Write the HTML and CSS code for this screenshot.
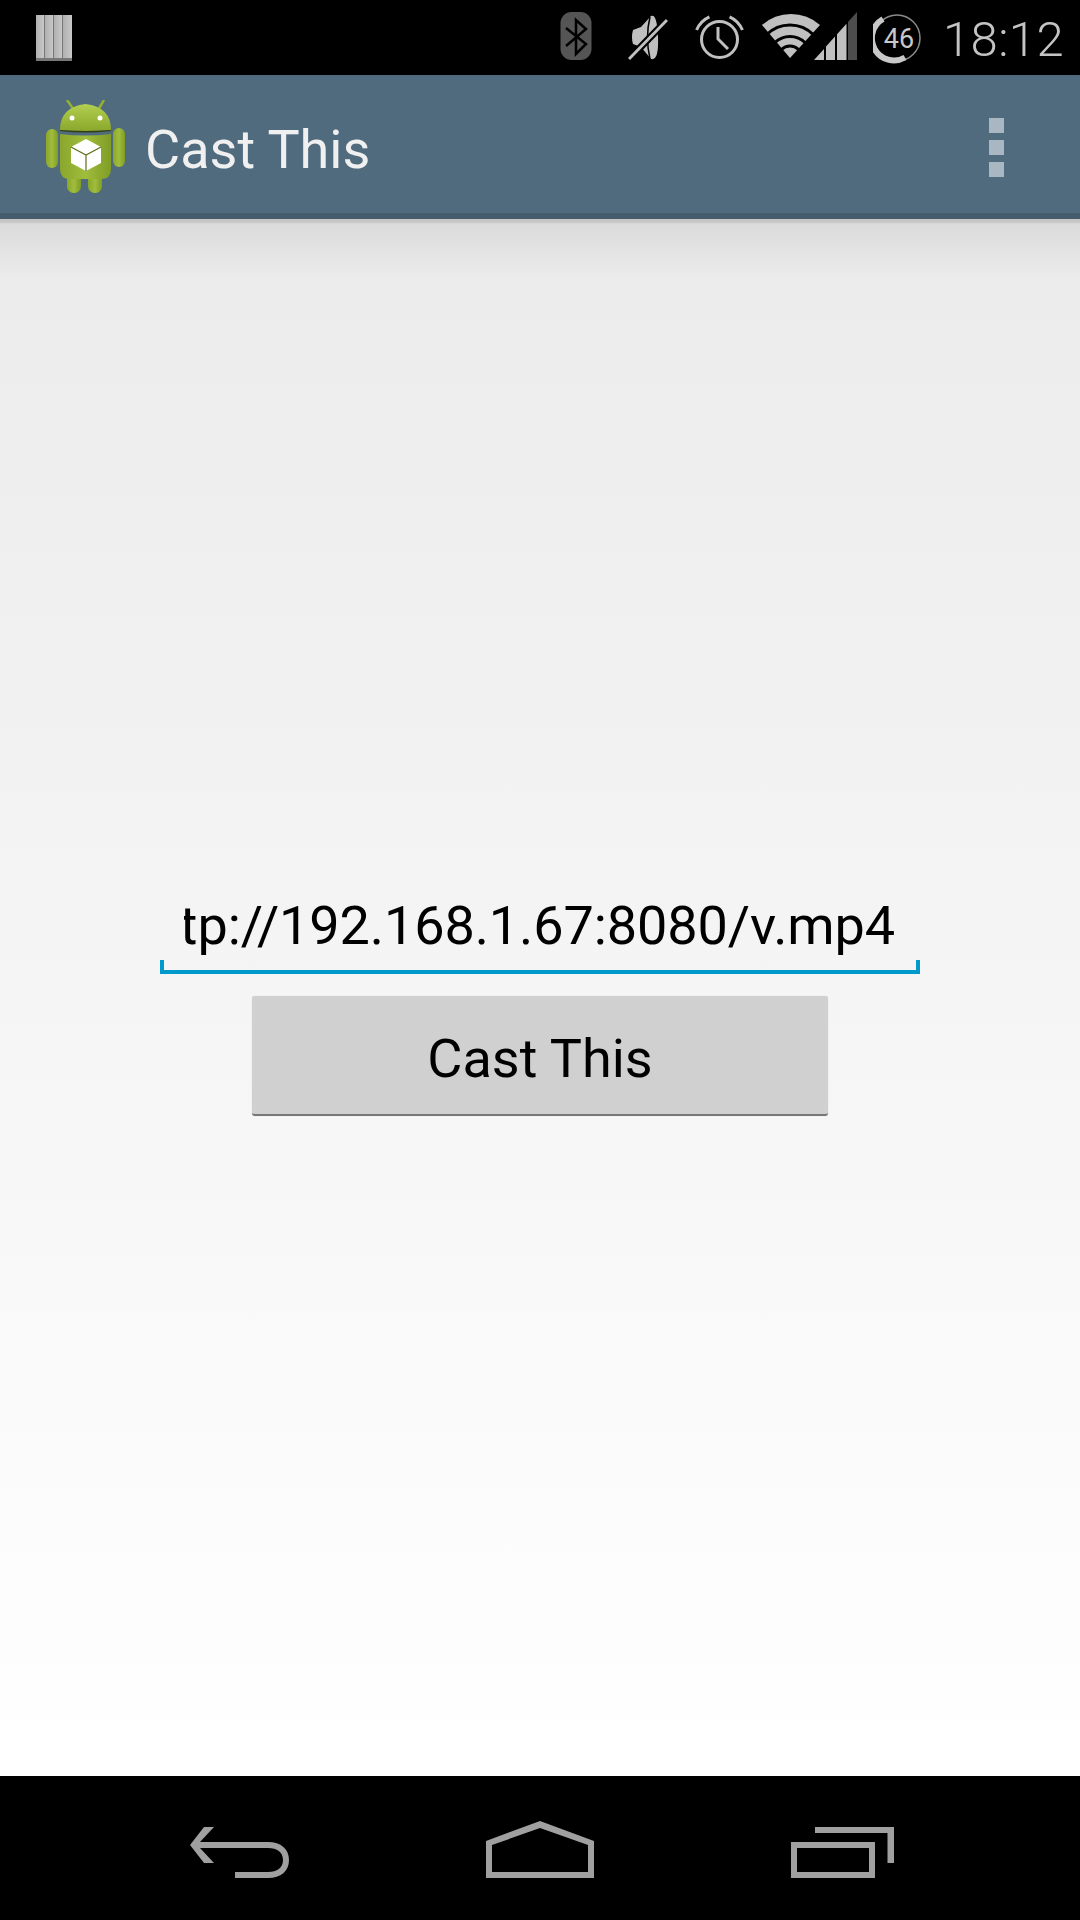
FILE: index.html
```html
<!DOCTYPE html>
<html lang="en">
<head>
<meta charset="utf-8">
<title>Cast This</title>
<link rel="stylesheet" href="styles.css">
</head>
<body>
<div class="screen">
  <header class="status">
    <svg class="sb-notif" width="36" height="75" viewBox="36 0 36 75">
      <defs>
        <linearGradient id="bar" x1="0" x2="1" y1="0" y2="0"><stop offset="0" stop-color="#b0b0b0"/><stop offset="1" stop-color="#c8c8c8"/></linearGradient>
      </defs>
      <path class="f-bevel" d="M36 17q0-2 2-2h32q2 0 2 2v44H36z"/>
      <rect x="36" y="15" width="8" height="43" fill="url(#bar)"/>
      <rect x="45" y="15" width="8" height="43" fill="url(#bar)"/>
      <rect x="54" y="15" width="8" height="43" fill="url(#bar)"/>
      <rect x="63" y="15" width="9" height="43" fill="url(#bar)"/>
    </svg>
    <svg class="sb-bt" width="32" height="75" viewBox="560 0 32 75">
      <rect x="560.500" y="12" width="31" height="48" rx="11" fill="#555"/>
      <path d="M566 28l20 16-10 10V20l10 9-20 17" fill="none" stroke="#000" stroke-width="2.500"/>
    </svg>
    <svg class="sb-mute" width="40" height="75" viewBox="628 0 40 75">
      <path class="f-ic" d="M633 30l8-3 10-11q6-3 7 21t-7 22L641 47l-8-3q-2-7 0-14z"/>
      <path d="M650 17q-5 20 0 42" fill="none" stroke="#000" stroke-width="1.500"/>
      <path d="M630 58l36-37" stroke="#000" stroke-width="7"/>
      <path d="M629 59l38-39" stroke="#c0c0c0" stroke-width="3"/>
    </svg>
    <svg class="sb-alarm" width="50" height="75" viewBox="695 0 50 75">
      <circle cx="719.500" cy="39.500" r="18" class="s-ic"/>
      <path class="s-ic" d="M718 27v12l10 10"/>
      <path class="s-ic" d="M696.600 30a24.800 24.800 0 0 1 12.800-13.200M729.600 16.800a24.800 24.800 0 0 1 12.800 13.200"/>
    </svg>
    <svg class="sb-net" width="97" height="75" viewBox="761 0 97 75">
      <path class="f-ic" d="M790 58L762 25A43.500 43.500 0 0 1 820 25Z"/>
      <g fill="none" stroke="#000" stroke-width="3">
        <circle cx="790" cy="58" r="33"/>
        <circle cx="790" cy="58" r="21.500"/>
        <circle cx="790" cy="58" r="12"/>
      </g>
      <path d="M812 60L826 44V60H812Z" fill="#000"/>
      <path class="f-ic" d="M814 60l10-11v11zM826 46.600l9-10V60h-9zM837 34.300l9.500-10.600V60H837z"/>
      <path d="M848 22l9-10v48h-9z" fill="#4d4d4d"/>
    </svg>
    <svg class="sb-batt" width="50" height="75" viewBox="873 0 50 75">
      <circle cx="897" cy="38" r="23" fill="none" stroke="#8a8a8a" stroke-width="1.500"/>
      <path d="M883 19A21 21 0 0 0 905 57.500" fill="none" stroke="#c8c8c8" stroke-width="6"/>
      <text class="batt-text" x="899" y="47.500" text-anchor="middle">46</text>
    </svg>
    <span class="time">18:12</span>
  </header>

  <div class="actionbar">
    <svg class="logo" width="80" height="94" viewBox="45 100 80 94">
      <defs>
        <linearGradient id="g-head" x1="0" x2="0" y1="0" y2="1"><stop offset="0" stop-color="#b3cf50"/><stop offset="1" stop-color="#8aa82c"/></linearGradient>
        <linearGradient id="g-body" x1="0" x2="1" y1="0" y2="0"><stop offset="0" stop-color="#8aa62d"/><stop offset=".5" stop-color="#a0bd3c"/><stop offset="1" stop-color="#7f9c26"/></linearGradient>
      </defs>
      <path d="M67 100l7 10M104 100l-6 10" stroke="#93b034" stroke-width="2.500"/>
      <rect x="46" y="129" width="12" height="39" rx="6" fill="url(#g-body)"/>
      <rect x="113" y="128" width="12" height="39" rx="6" fill="url(#g-body)"/>
      <rect x="67" y="170" width="14" height="23" rx="6.500" fill="url(#g-body)"/>
      <rect x="88" y="170" width="14" height="23" rx="6.500" fill="url(#g-body)"/>
      <path d="M60 130q0-23 25.500-26Q111 107 111 130q-25 2-51 0z" fill="url(#g-head)"/>
      <path d="M60 131q25 3 51 0v-1q-26 2-51 0z" fill="#33400f"/>
      <path d="M60 134q25 3 51 0v35q0 10-10 10H70q-10 0-10-10z" fill="url(#g-body)"/>
      <circle cx="72" cy="118" r="2.500" fill="#fff"/>
      <circle cx="100" cy="118" r="2.500" fill="#fff"/>
      <path d="M71 147l15-8 15 8v16l-15 8-15-8z" fill="#fff"/>
      <path d="M71 147l15 8 15-8M86 155v16" fill="none" stroke="#5d6f1c" stroke-width="1.200"/>
    </svg>
    <span class="title">Cast This</span>
    <div class="overflow"><span></span><span></span><span></span></div>
  </div>

  <main class="content">
    <div class="field">
      <div class="field-clip"><span class="field-text">http://192.168.1.67:8080/v.mp4</span></div>
    </div>
    <button class="cast" type="button">Cast This</button>
  </main>

  <nav class="navbar">
    <svg width="99" height="144" viewBox="190 1776 99 144">
      <path class="f-nav" d="M204 1827h10l-14 15h68c13 0 21 7 21 18s-8 18-21 18h-33v-6h33c9 0 15-4 15-12s-6-12-15-12h-68l14 15h-10l-14-18z"/>
    </svg>
    <svg width="108" height="144" viewBox="486 1776 108 144">
      <path class="f-nav" fill-rule="evenodd" d="M486 1841l54-20 54 20v37H486zM492 1845v27h96v-27l-48-17z"/>
    </svg>
    <svg width="103" height="144" viewBox="792 1776 103 144">
      <path class="f-nav" fill-rule="evenodd" d="M792 1842h84v36h-84zM798 1848v24h72v-24z"/>
      <path class="f-nav" d="M816 1827h79v36h-6.500v-30H816z"/>
    </svg>
  </nav>
</div>
</body>
</html>
```

FILE: styles.css
```css
* { box-sizing: border-box; }

html, body {
  margin: 0;
  padding: 0;
  background: #000;
}

.screen {
  display: flex;
  flex-direction: column;
  width: 1080px;
  height: 1920px;
  overflow: hidden;
  font-family: Roboto, "Liberation Sans", sans-serif;
}

.status {
  display: flex;
  align-items: center;
  flex: 0 0 75px;
  background: #000;
  padding-left: 36px;
}

.status svg { display: block; flex: none; }

.sb-bt { margin-left: 488px; }
.sb-mute { margin-left: 36px; }
.sb-alarm { margin-left: 27px; }
.sb-net { margin-left: 16px; }
.sb-batt { margin-left: 15px; }

.time {
  margin-left: 20px;
  padding-top: 4px;
  font-size: 49px;
  font-weight: 300;
  line-height: 71px;
  letter-spacing: .4px;
  color: #c4c4c4;
  white-space: nowrap;
}

.batt-text {
  font-family: Roboto, sans-serif;
  font-size: 27px;
  fill: #c8c8c8;
}

.f-ic { fill: #c0c0c0; }
.f-bevel { fill: #777; }
.s-ic { fill: none; stroke: #c0c0c0; stroke-width: 3; }
.f-nav { fill: #a0a0a0; }

.actionbar {
  display: flex;
  align-items: center;
  flex: 0 0 144px;
  padding-left: 45px;
  background: #506a7e;
  border-bottom: 6px solid #465c6d;
}

.logo { display: block; flex: none; margin-top: 6px; }

.title {
  margin-left: 20px;
  padding-top: 10px;
  font-size: 54px;
  color: #f0f0f0;
  white-space: nowrap;
}

.overflow {
  display: flex;
  flex-direction: column;
  gap: 7px;
  margin-left: auto;
  margin-right: 76px;
  margin-top: 6px;
}

.overflow span {
  display: block;
  width: 15px;
  height: 15px;
  background: #a9b7c3;
}

.content {
  display: flex;
  flex: 1;
  flex-direction: column;
  align-items: center;
  justify-content: center;
  padding-top: 1px;
  background:
    linear-gradient(rgba(0,0,0,.16), rgba(0,0,0,.16) 3px, rgba(0,0,0,.07) 5px, rgba(0,0,0,0) 60px),
    linear-gradient(#ebebeb, #ffffff);
}

.field {
  position: relative;
  width: 760px;
  height: 94px;
  padding: 0 25px 0 24px;
  border-bottom: 4px solid #0099cc;
}

.field::before,
.field::after {
  content: "";
  position: absolute;
  bottom: 0;
  width: 4px;
  height: 10px;
  background: #0099cc;
}

.field::before { left: 0; }
.field::after { right: 0; }

.field-clip {
  display: flex;
  justify-content: flex-end;
  height: 90px;
  overflow: hidden;
}

.field-text {
  flex: none;
  padding-top: 1px;
  font-size: 54px;
  line-height: 90px;
  letter-spacing: -.1px;
  color: #000;
  white-space: nowrap;
}

.cast {
  width: 576px;
  height: 120px;
  margin-top: 22px;
  padding: 6px 0 0;
  border: 0;
  border-bottom: 2px solid #777;
  border-radius: 3px;
  background: #d0d0d0;
  box-shadow: 0 0 1px rgba(0,0,0,.2);
  font-family: inherit;
  font-size: 54px;
  color: #000;
}

.navbar {
  display: flex;
  align-items: center;
  justify-content: space-between;
  flex: 0 0 144px;
  padding: 0 186px 0 190px;
  background: #000;
}

.navbar svg { display: block; }
```
